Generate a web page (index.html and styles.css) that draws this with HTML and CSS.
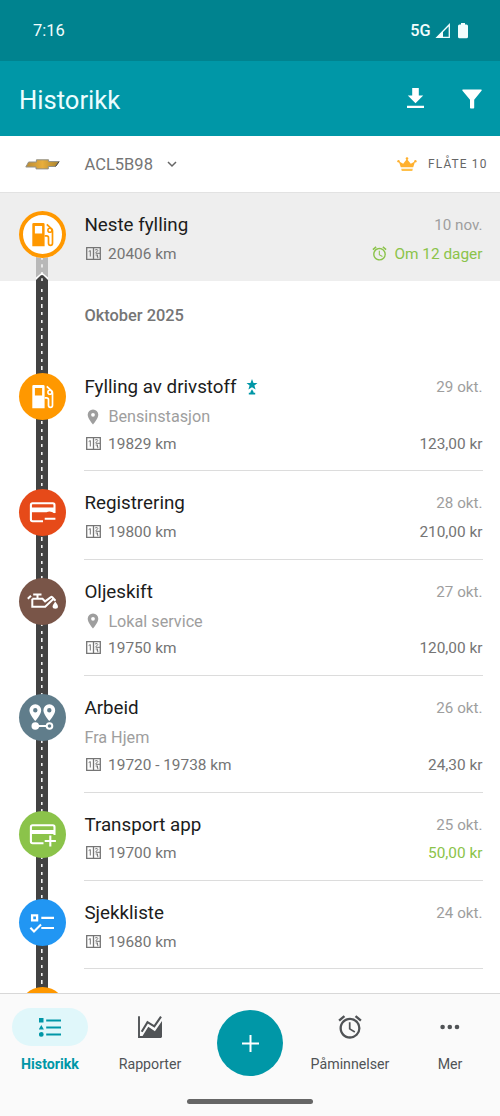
FILE: index.html
```html
<!DOCTYPE html>
<html lang="nb">
<head>
<meta charset="utf-8">
<title>Historikk</title>
<link rel="stylesheet" href="styles.css">
</head>
<body>
<svg class="defs" aria-hidden="true">
  <symbol id="odo" viewBox="0 0 15 13">
    <path d="M.7.7h13.600v11.600H.7zM7.500.7v11.600" fill="none" stroke="currentColor" stroke-width="1.300"/>
    <path d="M2.700 4.500l1.600-.9v5.900M9.200 2.900q2.700-1 2.600.7L9.400 6.200M9.800 6.300h4.200M9.600 8h2.300l-1 1.200q1.900.3.700 2" fill="none" stroke="currentColor" stroke-width="1"/>
  </symbol>
  <symbol id="pin" viewBox="0 0 12 16">
    <path d="M6 .5A5.300 5.300 0 0 0 .7 5.800C.7 9.700 6 15.500 6 15.500s5.300-5.800 5.300-9.700A5.300 5.300 0 0 0 6 .5zm0 7.200a1.900 1.900 0 1 1 0-3.800 1.900 1.900 0 0 1 0 3.800z" fill="currentColor"/>
  </symbol>
  <symbol id="alarm" viewBox="0 0 24 24">
    <path d="M22 5.720l-4.600-3.860-1.290 1.530 4.600 3.860L22 5.720zM7.880 3.390L6.600 1.860 2 5.710l1.290 1.530 4.590-3.850zM12.500 8H11v6l4.750 2.850.75-1.230-4-2.370V8zM12 4c-4.970 0-9 4.030-9 9s4.020 9 9 9a9 9 0 0 0 0-18zm0 16c-3.870 0-7-3.130-7-7s3.130-7 7-7 7 3.130 7 7-3.130 7-7 7z" fill="currentColor"/>
  </symbol>
  <symbol id="gas" viewBox="0 0 47 47">
    <path d="M14.600 12h9.700q1.300 0 1.300 1.300v22H13.300v-22q0-1.300 1.300-1.300zM15.900 15v7.500h7.200V15z" fill="currentColor" fill-rule="evenodd"/>
    <path d="M27.800 13.300l5 4.800q.7.700.7 1.800v12.300q0 2.100-2 2.100t-2-2.100v-5.400q0-1.900-1.900-1.900h-2" fill="none" stroke="currentColor" stroke-width="1.700"/>
    <circle cx="30.900" cy="19.200" r="2" fill="none" stroke="currentColor" stroke-width="1.600"/>
  </symbol>
</svg>

<header class="status">
  <span>7:16</span>
  <div class="status-right">
    <span class="net">5G</span>
    <svg width="16" height="16" viewBox="0 0 16 16"><path d="M14.300 1.700v12.700H2z" fill="none" stroke="currentColor" stroke-width="1.300"/><path d="M8 8v6.400H2z" fill="currentColor"/></svg>
    <svg class="battery" width="10" height="16" viewBox="0 0 10 16"><path d="M3 0h4v1.500h1.500Q10 1.500 10 3v10.700q0 1.500-1.500 1.500h-7Q0 15.200 0 13.700V3q0-1.500 1.500-1.500H3z" fill="currentColor"/></svg>
  </div>
</header>

<div class="appbar">
  <h1>Historikk</h1>
  <svg width="17" height="21" viewBox="0 0 17 21"><path d="M5.200 0h6.600v7.500h4.400L8.500 15.200.8 7.500h4.400zM0 17.700h17V20H0z" fill="currentColor"/></svg>
  <svg class="filter" width="20" height="20" viewBox="0 0 20 20"><path d="M.8.500h18.400q.9.600.3 1.300L12.200 10.800V18.700q0 .8-.8.800H8.800q-.8 0-.8-.8v-7.900L.5 1.800Q0 1 .8.500z" fill="currentColor"/></svg>
</div>

<div class="vehicle">
  <svg class="make" width="35" height="11" viewBox="0 0 35 11">
    <defs><linearGradient id="gold" x1="0" x2="1" y1="0" y2="0"><stop offset="0" stop-color="#b98b35"/><stop offset=".5" stop-color="#e8ae3c"/><stop offset="1" stop-color="#a8822e"/></linearGradient></defs>
    <path d="M3.600 3h7.800V.8h12.200v1.800h10.500L30.500 7.500h-7.200v2.400H11V8H.8z" fill="url(#gold)" stroke="#929087" stroke-width="1"/>
    <path d="M34 2.700L30.600 7.400" stroke="#444" stroke-width="1"/>
  </svg>
  <span class="plate">ACL5B98</span>
  <svg width="10" height="7" viewBox="0 0 10 7"><path d="M1 1l4 4 4-4" fill="none" stroke="#666" stroke-width="1.500"/></svg>
  <svg class="crown" width="20" height="15" viewBox="0 0 20 15"><path d="M3.800 10.300L1.700 4.300l4.500 2.400L9.900 2l3.900 4.700 4.400-2.400-2 6z" fill="#ffb02e"/><circle cx="10" cy="1.600" r="1.300" fill="#ffb02e"/><circle cx="1.500" cy="4.200" r="1.200" fill="#ffb02e"/><circle cx="18.400" cy="4.200" r="1.200" fill="#ffb02e"/><path d="M4.200 11.700h11.600l-.5 2.400H4.800z" fill="#ffc04a"/></svg>
  <span class="plan">FLÅTE 10</span>
</div>

<main class="history">
  <section class="entry next">
    <div class="rail">
      <svg class="disc ring" viewBox="0 0 47 47"><use href="#gas"/></svg>
      <svg class="tip" width="12" height="30" viewBox="0 0 12 30"><path d="M0 0h12v30H0z" fill="#b8b8b8"/><path d="M6 0v18" stroke="#f4f4f4" stroke-width="1.600" stroke-dasharray="3.300 4.470" stroke-dashoffset="-1.500"/><path d="M0 22.500l6-5 6 5V26H0z" fill="#fff"/><path d="M0 30v-5l4.300-4.300q1.700-1.300 3.400 0l4.300 4.300v5z" fill="#424242"/><path d="M6 23.300v2.800" stroke="#f0f0f0" stroke-width="1.600"/></svg>
    </div>
    <div class="body">
      <div class="line title"><h2>Neste fylling</h2><time>10 nov.</time></div>
      <div class="line"><svg class="odo"><use href="#odo"/></svg><span>20406 km</span><span class="end green due"><svg class="clock"><use href="#alarm"/></svg>Om 12 dager</span></div>
    </div>
  </section>

  <div class="road">
    <h3>Oktober 2025</h3>

    <section class="entry">
      <div class="rail"><svg class="disc orange" viewBox="0 0 47 47"><use href="#gas"/></svg></div>
      <div class="body">
        <div class="line title"><h2>Fylling av drivstoff</h2><svg class="star" width="12" height="17" viewBox="0 0 12 17"><path d="M6 0l1.500 3.900h4L8.400 6.400 9.600 10.400 6 8.200 2.400 10.400 3.600 6.400.5 3.900h4zM6 10.200l1.600 2.700v.9h1.600v1.700H2.800v-1.700h1.600v-.9z" fill="#0097a7"/></svg><time>29 okt.</time></div>
        <div class="line place"><svg class="pin"><use href="#pin"/></svg><span>Bensinstasjon</span></div>
        <div class="line"><svg class="odo"><use href="#odo"/></svg><span>19829 km</span><span class="end">123,00 kr</span></div>
      </div>
    </section>

    <section class="entry">
      <div class="rail"><svg class="disc red" viewBox="0 0 47 47"><path d="M24 32.300H13.600q-1.700 0-1.700-1.700V15.900q0-1.700 1.700-1.700h20.200q1.700 0 1.700 1.700V24" fill="none" stroke="currentColor" stroke-width="2.100"/><path d="M12 18.600h23.500v5.600q-4.500-3-8-.9H12z" fill="currentColor"/><path d="M25.700 29.800h10.700" stroke="currentColor" stroke-width="2"/></svg></div>
      <div class="body">
        <div class="line title"><h2>Registrering</h2><time>28 okt.</time></div>
        <div class="line"><svg class="odo"><use href="#odo"/></svg><span>19800 km</span><span class="end">210,00 kr</span></div>
      </div>
    </section>

    <section class="entry">
      <div class="rail"><svg class="disc brown" viewBox="0 0 47 47"><path d="M13.300 20.700v8h12.900l8.400-7.900M13.300 20.700h10.200l2.600 2.700 5.800-4.300q.8-.5 1.400.2l3.200 3.400M18.500 20.500v-3.500M14.200 16.400h8.300M12 17.700l-3.200 3" fill="none" stroke="currentColor" stroke-width="2"/><path d="M36.300 23.500q-5.400 6.900 0 7.200 5.400-.3 0-7.200z" fill="currentColor"/></svg></div>
      <div class="body">
        <div class="line title"><h2>Oljeskift</h2><time>27 okt.</time></div>
        <div class="line place"><svg class="pin"><use href="#pin"/></svg><span>Lokal service</span></div>
        <div class="line"><svg class="odo"><use href="#odo"/></svg><span>19750 km</span><span class="end">120,00 kr</span></div>
      </div>
    </section>

    <section class="entry">
      <div class="rail"><svg class="disc slate" viewBox="0 0 47 47"><path d="M16.300 10.300a5.900 5.900 0 0 0-5.900 5.900c0 4.400 5.900 10.800 5.900 10.800s5.900-6.400 5.900-10.800a5.900 5.900 0 0 0-5.900-5.900zm0 8.200a2.200 2.200 0 1 1 0-4.400 2.200 2.200 0 0 1 0 4.400zM30.300 10.300a5.900 5.900 0 0 0-5.900 5.900c0 4.400 5.900 10.800 5.900 10.800s5.900-6.400 5.900-10.800a5.900 5.900 0 0 0-5.900-5.900zm0 8.200a2.200 2.200 0 1 1 0-4.400 2.200 2.200 0 0 1 0 4.400z" fill="currentColor"/><path d="M16.300 32H27.500" stroke="currentColor" stroke-width="2.200"/><circle cx="16.300" cy="32" r="3.800" fill="currentColor"/><circle cx="30.500" cy="32" r="2.800" fill="none" stroke="currentColor" stroke-width="2"/></svg></div>
      <div class="body">
        <div class="line title"><h2>Arbeid</h2><time>26 okt.</time></div>
        <div class="line place"><span>Fra Hjem</span></div>
        <div class="line"><svg class="odo"><use href="#odo"/></svg><span>19720 - 19738 km</span><span class="end">24,30 kr</span></div>
      </div>
    </section>

    <section class="entry">
      <div class="rail"><svg class="disc lime" viewBox="0 0 47 47"><path d="M24.500 32.300H13.600q-1.700 0-1.700-1.700V15.900q0-1.700 1.700-1.700h20.200q1.700 0 1.700 1.700V24" fill="none" stroke="currentColor" stroke-width="2.100"/><path d="M12 19.100h23.500v3.800H12z" fill="currentColor"/><path d="M25.700 30h11.200M31.300 24.400v11.200" stroke="currentColor" stroke-width="2.100"/></svg></div>
      <div class="body">
        <div class="line title"><h2>Transport app</h2><time>25 okt.</time></div>
        <div class="line"><svg class="odo"><use href="#odo"/></svg><span>19700 km</span><span class="end green">50,00 kr</span></div>
      </div>
    </section>

    <section class="entry">
      <div class="rail"><svg class="disc blue" viewBox="0 0 47 47"><path d="M13.100 16.400h5v5h-5z" fill="none" stroke="currentColor" stroke-width="2.300"/><path d="M22.300 18.900h12.700M22.300 29h12.700M11.400 28.700l3.600 3.700 7-6.900" fill="none" stroke="currentColor" stroke-width="2.100"/></svg></div>
      <div class="body">
        <div class="line title"><h2>Sjekkliste</h2><time>24 okt.</time></div>
        <div class="line"><svg class="odo"><use href="#odo"/></svg><span>19680 km</span></div>
      </div>
    </section>

    <section class="entry">
      <div class="rail"><svg class="disc orange" viewBox="0 0 47 47"></svg></div>
    </section>
  </div>
</main>

<nav class="tabs">
  <div class="tab active">
    <div class="pill"><svg width="22" height="19" viewBox="0 0 22 19"><path d="M0 0h4.500v4.500H0zM2.300 7l2.600 4.600H-.3z" fill="currentColor"/><circle cx="2.300" cy="16.400" r="2.400" fill="currentColor"/><path d="M7.200 2.400H22M7.200 9.500H22M7.200 16.500H22" stroke="currentColor" stroke-width="2"/></svg></div>
    <span>Historikk</span>
  </div>
  <div class="tab">
    <div class="pill"><svg width="24" height="22" viewBox="0 0 24 22"><path d="M1 .3v20.700h22" fill="none" stroke="currentColor" stroke-width="1.900"/><path d="M3.700 15.800L9.500 6.200l6.800 4.200L23 .6" fill="none" stroke="currentColor" stroke-width="2.100"/><path d="M3.600 21.500L10.300 10.800l6.600 4.400L24 5v16.500z" fill="currentColor"/></svg></div>
    <span>Rapporter</span>
  </div>
  <div class="fab"><svg width="17" height="17" viewBox="0 0 17 17"><path d="M8.500 0v17M0 8.500h17" stroke="#fff" stroke-width="2"/></svg></div>
  <div class="tab">
    <div class="pill"><svg width="28" height="28"><use href="#alarm"/></svg></div>
    <span>Påminnelser</span>
  </div>
  <div class="tab">
    <div class="pill"><svg width="20" height="6" viewBox="0 0 20 6"><g fill="currentColor"><circle cx="2.600" cy="3" r="2.300"/><circle cx="9.800" cy="3" r="2.300"/><circle cx="17" cy="3" r="2.300"/></g></svg></div>
    <span>Mer</span>
  </div>
  <div class="home"></div>
</nav>
</body>
</html>
```
FILE: styles.css
```css
* { box-sizing: border-box; }
body {
  margin: 0;
  height: 1116px;
  display: flex;
  flex-direction: column;
  overflow: hidden;
  background: #fff;
  color: #757575;
  font-family: Roboto, "Liberation Sans", sans-serif;
  font-size: 15.4px;
}
h1, h2, h3 { margin: 0; font-weight: 400; }
svg { display: block; flex: none; }
.defs { position: absolute; width: 0; height: 0; }

.status {
  height: 61px;
  flex: none;
  display: flex;
  align-items: center;
  justify-content: space-between;
  padding: 0 32.500px 0 33px;
  background: #00838f;
  color: #f2fdfd;
  font-size: 16.5px;
}
.status-right { display: flex; align-items: center; }
.net { font-weight: 500; font-size: 16.300px; margin-right: 4px; }
.battery { margin-left: 7px; }

.appbar {
  height: 75px;
  flex: none;
  display: flex;
  align-items: center;
  padding: 0 18px 0 19px;
  background: #0097a7;
  color: #fff;
}
.appbar h1 { flex: 1; font-size: 25.600px; line-height: 30px; padding-top: 2px; color: #ecfdff; }
.filter { margin-left: 38px; }

.vehicle {
  height: 57px;
  flex: none;
  display: flex;
  align-items: center;
  padding: 0 12.500px 0 24.500px;
  border-bottom: 1px solid #e2e2e2;
}
.plate { margin: 0 14px 0 25px; font-size: 16.5px; }
.crown { margin-left: auto; }
.plan { margin-left: 11.500px; font-size: 11.900px; letter-spacing: 1.150px; color: #666; }

.history { flex: 1; min-height: 0; overflow: hidden; }
.entry { display: grid; grid-template-columns: 84px 1fr; }
.rail { padding: 18px 0 0 18.600px; height: 80px; }
.disc { width: 47px; height: 47px; border-radius: 50%; color: #fff; }
.ring { background: #fff; color: #ff9800; box-shadow: inset 0 0 0 4px #ff9800; }
.orange { background: #ff9800; }
.red { background: #e64a19; }
.brown { background: #795548; }
.slate { background: #607d8b; }
.lime { background: #8bc34a; }
.blue { background: #2196f3; }

.body { margin-right: 17.500px; padding: 17px 0 13.300px; border-bottom: 1px solid #dcdcdc; }
.line { display: flex; align-items: center; height: 27px; }
.line.title { height: 30px; }
.title h2 { font-size: 18.800px; line-height: 24px; color: #1c1c1c; }
.title h2, .line > span { margin-left: .4px; }
time { margin-left: auto; color: #9e9e9e; font-size: 15.200px; }
.line.place { height: 28.200px; padding-top: 1px; color: #9e9e9e; font-size: 16.200px; }
.line > .end { margin-left: auto; }
.green { color: #8bc34a; }
.due { display: flex; align-items: center; gap: 6px; }
.clock { width: 17px; height: 17px; }
.odo { width: 15px; height: 13px; margin: 0 7px 1px 1.700px; }
.pin { width: 12px; height: 16px; margin: 0 9px 0 3px; }
.star { margin-left: 9px; }

.next { height: 87.500px; position: relative; background: #eee; }
.next .body { border: 0; }
.next .disc { position: relative; z-index: 1; }
.tip { position: absolute; left: 36px; top: 62px; }

.road {
  background:
    repeating-linear-gradient(to bottom, #f2f2f2 0 3.300px, transparent 3.300px 7.770px) 41.300px 0 / 1.600px 100% no-repeat,
    linear-gradient(#424242, #424242) 36px 0 / 12px 100% no-repeat;
}
.road h3 { height: 74.500px; padding: 25.500px 0 0 84.400px; font-size: 16.400px; line-height: 20px; font-weight: 500; }

.tabs {
  height: 123px;
  flex: none;
  display: grid;
  grid-template-columns: repeat(5, 1fr);
  grid-template-rows: 105px 1fr;
  border-top: 1px solid #d8d8d8;
  background: #fafafa;
  color: #505356;
}
.tab { display: flex; flex-direction: column; align-items: center; padding-top: 14px; font-size: 14.200px; }
.pill { width: 76px; height: 38px; border-radius: 19px; display: flex; align-items: center; justify-content: center; }
.tab span { margin-top: 10px; line-height: 17px; }
.active { color: #0097a7; font-weight: 700; }
.active .pill { background: #e0f7fa; }
.fab { width: 66px; height: 66px; margin: 16px auto 0; border-radius: 50%; background: #0097a7; display: flex; align-items: center; justify-content: center; }
.home { grid-column: 1 / -1; justify-self: center; width: 126px; height: 5px; border-radius: 3px; background: #666; }
```
